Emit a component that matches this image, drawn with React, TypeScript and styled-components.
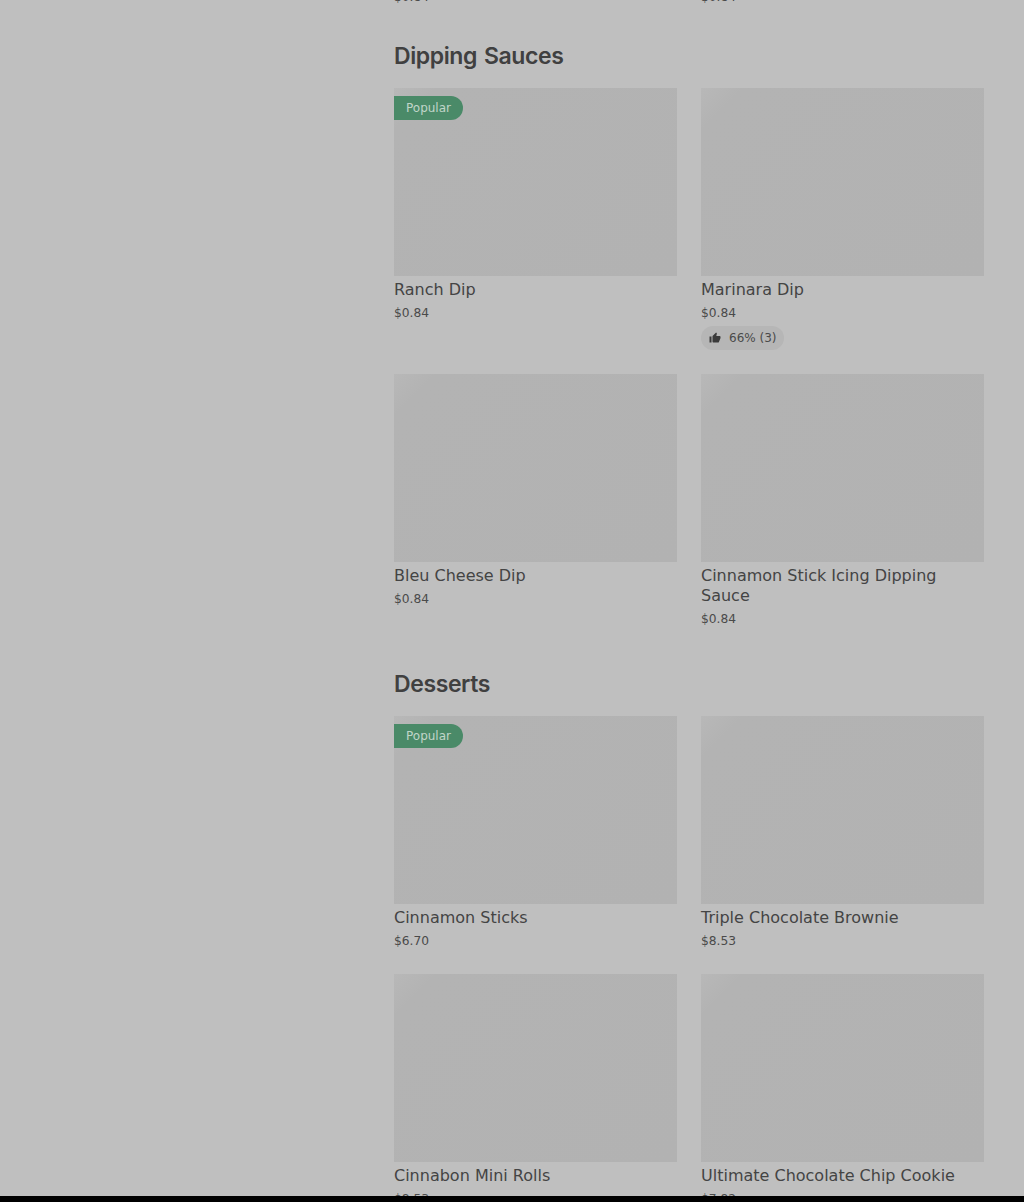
import React from "react";
import styled, { createGlobalStyle } from "styled-components";

const Global = createGlobalStyle`
  html, body { margin: 0; padding: 0; background: #000; }
  body { font-family: "DejaVu Sans", sans-serif; }
`;

const Viewport = styled.div`
  height: 1196px;
  overflow: hidden;
  background: #bfbfbf;
`;

const Menu = styled.main`
  display: flex;
  flex-direction: column;
  gap: 40px;
  margin-top: -16px;
  padding: 0 40px 0 394px;
`;

const Section = styled.section`
  display: flex;
  flex-direction: column;
  gap: 16px;
`;

const Title = styled.h2`
  margin: 0;
  font: 600 23px/32px Inter, sans-serif;
  letter-spacing: -0.4px;
  word-spacing: 1.5px;
  color: #404040;
`;

const Grid = styled.div`
  display: grid;
  grid-template-columns: 283px 283px;
  column-gap: 24px;
  row-gap: 24px;
`;

const Card = styled.article`
  display: flex;
  flex-direction: column;
  align-items: flex-start;
`;

const Photo = styled.div`
  position: relative;
  width: 100%;
  height: 188px;
  background: linear-gradient(135deg, #b8b8b8 0%, #b3b3b3 9%, #b2b2b2 100%);
`;

const Badge = styled.span`
  position: absolute;
  top: 8px;
  left: 0;
  display: flex;
  align-items: center;
  height: 24px;
  padding: 0 12px;
  border-radius: 0 12px 12px 0;
  background: #4a8a68;
  color: #c0d5c8;
  font-size: 12px;
`;

const Name = styled.h3`
  margin: 4px 0 0;
  font-size: 16px;
  font-weight: 400;
  line-height: 20px;
  color: #444;
`;

const Price = styled.div`
  margin: 3px 0 -1px;
  font-size: 12.25px;
  line-height: 20px;
  color: #4a4a4a;
`;

const Rating = styled.div`
  display: flex;
  align-items: center;
  gap: 8px;
  height: 24px;
  margin-top: 4px;
  padding: 0 8px;
  border-radius: 12px;
  background: #b6b6b6;
  color: #4a4a4a;
  font-size: 12px;
`;

const Thumb = () => (
  <svg width="12" height="12" viewBox="0 0 24 24" fill="#3a3a3a" aria-hidden="true">
    <path d="M1 21h4V9H1v12zm22-11c0-1.1-.9-2-2-2h-6.31l.95-4.57.03-.32c0-.41-.17-.79-.44-1.06L14.17 1 7.59 7.59C7.22 7.95 7 8.45 7 9v10c0 1.1.9 2 2 2h9c.83 0 1.54-.5 1.84-1.22l3.02-7.05c.09-.23.14-.47.14-.73v-2z" />
  </svg>
);

type Item = { name: string; price: string; popular?: boolean; rating?: string };

const sections: { title: string; items: Item[] }[] = [
  {
    title: "Dipping Sauces",
    items: [
      { name: "Ranch Dip", price: "$0.84", popular: true },
      { name: "Marinara Dip", price: "$0.84", rating: "66% (3)" },
      { name: "Bleu Cheese Dip", price: "$0.84" },
      { name: "Cinnamon Stick Icing Dipping Sauce", price: "$0.84" },
    ],
  },
  {
    title: "Desserts",
    items: [
      { name: "Cinnamon Sticks", price: "$6.70", popular: true },
      { name: "Triple Chocolate Brownie", price: "$8.53" },
      { name: "Cinnabon Mini Rolls", price: "$8.53" },
      { name: "Ultimate Chocolate Chip Cookie", price: "$7.82" },
    ],
  },
];

const TopGrid = styled(Grid)`
  height: 16px;
`;

export default function App() {
  return (
    <Viewport>
      <Global />
      <Menu>
        <TopGrid>
          <Price>$0.84</Price>
          <Price>$0.84</Price>
        </TopGrid>
        {sections.map((s) => (
          <Section key={s.title}>
            <Title>{s.title}</Title>
            <Grid>
              {s.items.map((it) => (
                <Card key={it.name}>
                  <Photo>{it.popular && <Badge>Popular</Badge>}</Photo>
                  <Name>{it.name}</Name>
                  <Price>{it.price}</Price>
                  {it.rating && (
                    <Rating>
                      <Thumb />
                      {it.rating}
                    </Rating>
                  )}
                </Card>
              ))}
            </Grid>
          </Section>
        ))}
      </Menu>
    </Viewport>
  );
}
